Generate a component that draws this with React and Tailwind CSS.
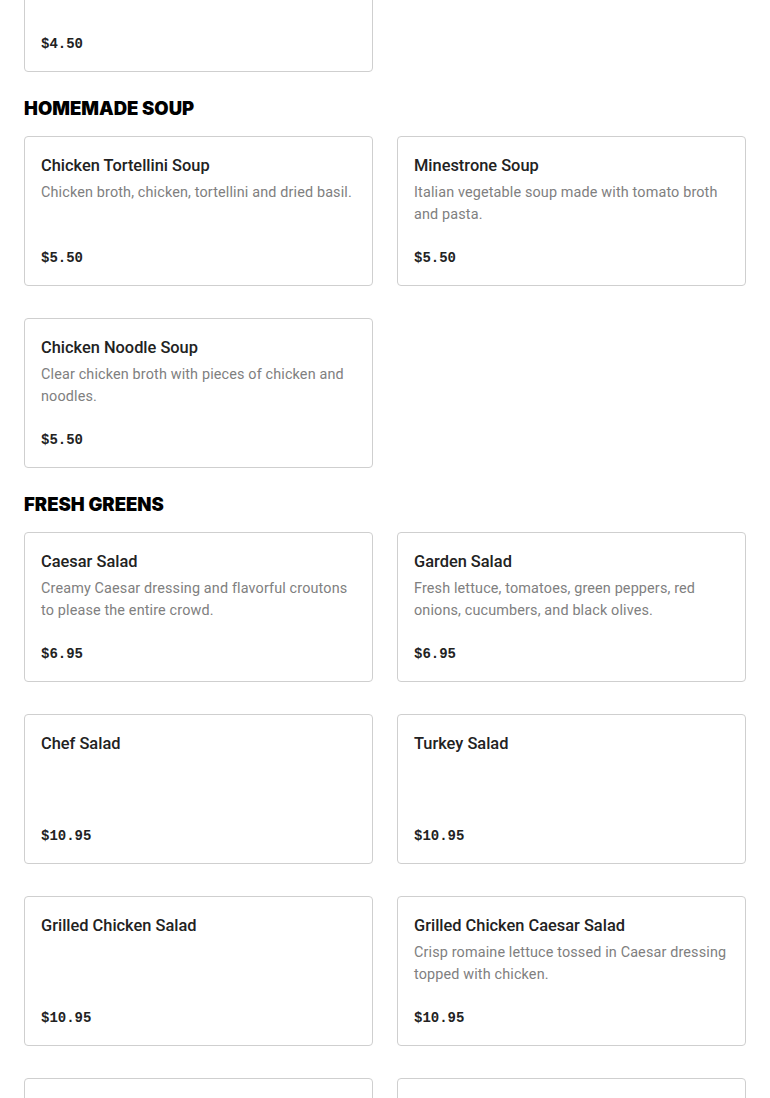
import React from 'react';

const sections = [
  {
    title: null,
    items: [{ name: '', desc: '', price: '$4.50' }],
  },
  {
    title: 'HOMEMADE SOUP',
    items: [
      {
        name: 'Chicken Tortellini Soup',
        desc: 'Chicken broth, chicken, tortellini and dried basil.',
        price: '$5.50',
      },
      {
        name: 'Minestrone Soup',
        desc: 'Italian vegetable soup made with tomato broth and pasta.',
        price: '$5.50',
      },
      {
        name: 'Chicken Noodle Soup',
        desc: 'Clear chicken broth with pieces of chicken and noodles.',
        price: '$5.50',
      },
    ],
  },
  {
    title: 'FRESH GREENS',
    items: [
      {
        name: 'Caesar Salad',
        desc: 'Creamy Caesar dressing and flavorful croutons to please the entire crowd.',
        price: '$6.95',
      },
      {
        name: 'Garden Salad',
        desc: 'Fresh lettuce, tomatoes, green peppers, red onions, cucumbers, and black olives.',
        price: '$6.95',
      },
      { name: 'Chef Salad', desc: '', price: '$10.95' },
      { name: 'Turkey Salad', desc: '', price: '$10.95' },
      { name: 'Grilled Chicken Salad', desc: '', price: '$10.95' },
      {
        name: 'Grilled Chicken Caesar Salad',
        desc: 'Crisp romaine lettuce tossed in Caesar dressing topped with chicken.',
        price: '$10.95',
      },
      { name: '', desc: '', price: '' },
      { name: '', desc: '', price: '' },
    ],
  },
];

const MenuCard = ({ item }) => (
  <div className="flex h-[150px] flex-col rounded-[4px] border border-[#cfcfcf] bg-white px-4 pb-4 pt-[17px]">
    {item.name && (
      <p className="font-['Roboto',sans-serif] text-[16.4px] font-medium leading-6 text-[#222]">
        {item.name}
      </p>
    )}
    {item.desc && (
      <p className="mt-1 font-['Roboto',sans-serif] text-[14.4px] leading-[22px] tracking-[0.01em] text-[#808080]">
        {item.desc}
      </p>
    )}
    {item.price && (
      <p className="mt-auto font-['Liberation_Mono',monospace] text-[14px] font-bold leading-[22px] text-[#222]">
        {item.price}
      </p>
    )}
  </div>
);

const App = () => {
  return (
    <div className="h-[1098px] overflow-hidden bg-white font-['Inter',sans-serif]">
      <div className="-mt-[78px] px-6">
        {sections.map((section, i) => (
          <div key={i}>
            {section.title && (
              <h2 className="mb-[14px] mt-[22px] text-[18.5px] font-black leading-7 text-black">
                {section.title}
              </h2>
            )}
            <div className="grid grid-cols-2 gap-x-6 gap-y-8">
              {section.items.map((item, j) => (
                <MenuCard key={j} item={item} />
              ))}
            </div>
          </div>
        ))}
      </div>
    </div>
  );
};

export default App;
